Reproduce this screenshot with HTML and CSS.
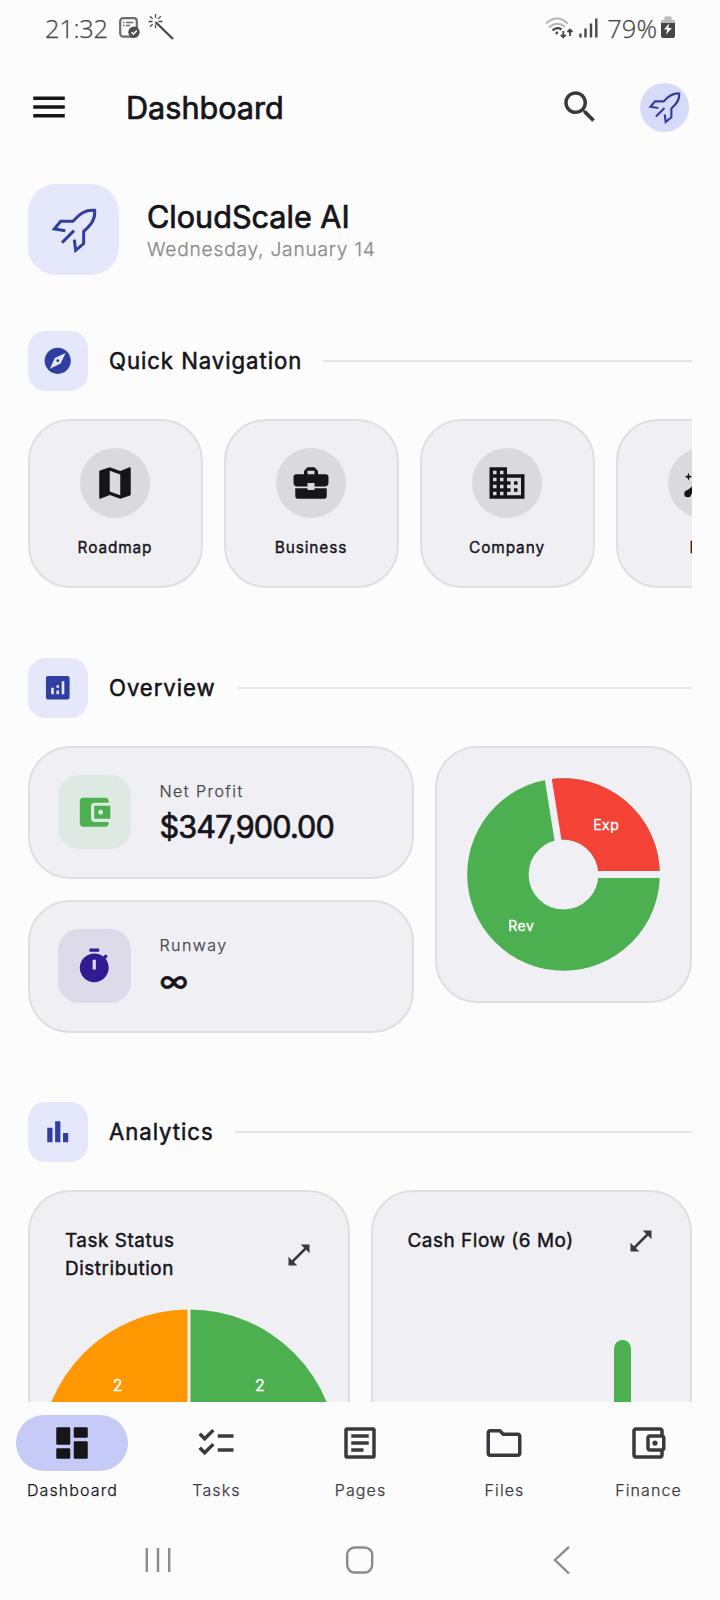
FILE: index.html
```html
<!DOCTYPE html>
<html lang="en">
<head>
    <meta charset="UTF-8">
    <meta name="viewport" content="width=device-width, initial-scale=1.0">
    <title>Dashboard</title>
    <link rel="stylesheet" href="styles.css">
</head>
<body>
    <svg class="defs" width="0" height="0">
        <symbol id="rocket" viewBox="142 129 156 156">
            <path d="M194 209L161 204L180 181H217C238 157 256 145 282 148C284 174 273 190 249 211V248L225 268L221 236M220 209L184 245" fill="none" stroke="currentColor" stroke-width="9"/>
        </symbol>
        <symbol id="expand" viewBox="0 0 24 24">
            <path d="M21 10.5V3h-7.5l2.9 2.9L5.9 16.4 3 13.5V21h7.5l-2.9-2.9L18.1 7.6z" fill="currentColor"/>
        </symbol>
    </svg>

    <div class="status-bar">
        <span class="clock">21:32</span>
        <svg class="note-icon" width="21" height="22" viewBox="0 0 21 22">
            <rect x="1.2" y="1.2" width="16.6" height="18.4" rx="3" fill="none" stroke="#6b6b6b" stroke-width="2.2"/>
            <path d="M4 5.5h1.5M7 5.5h7.5M4 8.5h1.5M7 8.5h4" stroke="#6b6b6b" stroke-width="1.5"/>
            <circle cx="15" cy="15.2" r="5.7" fill="#4f4f4f"/>
            <path d="M12.5 15.2l2 2 3.3-3.7" fill="none" stroke="#fcfcfc" stroke-width="1.6"/>
        </svg>
        <svg class="wand-icon" width="27" height="27" viewBox="0 0 27 27">
            <path d="M7.5 8L25 25" stroke="#4a4a4a" stroke-width="2.4"/>
            <path d="M7.5 0v4M7.5 10.5v3.5M.5 7.500h4M10.500 7.500h4M2 2.200l2.700 2.700M12.800 2.200l-2.700 2.700M2 12.800l2.700-2.700" stroke="#4a4a4a" stroke-width="1.300"/>
        </svg>
        <svg class="wifi-icon" width="28" height="22" viewBox="0 0 28 22">
            <path d="M1 6.500Q11.800-3.500 22.800 6.500M4 10.500Q11.800 3.500 20 9.800" fill="none" stroke="#b5b5b5" stroke-width="2"/>
            <path d="M7.500 13.500Q11.800 9.500 16.500 12.500" fill="none" stroke="#454545" stroke-width="2.200"/>
            <circle cx="11.800" cy="16" r="1.400" fill="#454545"/>
            <path d="M18.300 14v6M15.800 17.800l2.500 2.500 2.500-2.500M25 19v-6M22.500 15l2.500-2.500 2.500 2.500" fill="none" stroke="#454545" stroke-width="1.800"/>
        </svg>
        <svg class="signal-icon" width="19" height="20" viewBox="0 0 19 20">
            <path d="M1.500 15.500V19.500M6.500 10.500V19.500M12 5.500V19.500M17.300.5V19.500" stroke="#4a4a4a" stroke-width="2.400"/>
        </svg>
        <span class="battery-text">79%</span>
        <svg class="battery-icon" width="14" height="23" viewBox="0 0 14 23">
            <path d="M3.500 0.500h7v3h1.500a2 2 0 0 1 2 2V8H0V5.500a2 2 0 0 1 2-2h1.500z" fill="#bcbcbc"/>
            <path d="M0 7h14v13a2 2 0 0 1-2 2H2a2 2 0 0 1-2-2z" fill="#454545"/>
            <path d="M8 7.500L3 13.500h3.300L5 18.500l6-6.500H7.500z" fill="#fcfcfc"/>
        </svg>
    </div>

    <header class="app-bar">
        <svg class="icon" viewBox="0 0 24 24"><path d="M3 18h18v-2H3v2zm0-5h18v-2H3v2zm0-7v2h18V6H3z"/></svg>
        <h1 class="app-title bold">Dashboard</h1>
        <svg class="icon search" viewBox="0 0 24 24"><path d="M15.500 14h-.79l-.28-.27C15.410 12.590 16 11.110 16 9.500 16 5.910 13.090 3 9.500 3S3 5.910 3 9.500 5.910 16 9.500 16c1.610 0 3.090-.59 4.230-1.570l.27.28v.79l5 4.990L20.490 19l-4.990-5zm-6 0C7.010 14 5 11.990 5 9.500S7.010 5 9.500 5 14 7.010 14 9.500 11.990 14 9.500 14z"/></svg>
        <div class="avatar"><svg width="37" height="37"><use href="#rocket"/></svg></div>
    </header>

    <main class="content">
        <div class="company">
            <div class="company-logo"><svg width="52" height="52"><use href="#rocket"/></svg></div>
            <div class="company-text">
                <div class="company-name bold">CloudScale AI</div>
                <div class="company-date">Wednesday, January 14</div>
            </div>
        </div>

        <div class="section-header">
            <div class="section-icon"><svg viewBox="0 0 24 24"><path d="M12 10.900c-.61 0-1.100.49-1.100 1.100s.49 1.100 1.100 1.100c.61 0 1.100-.49 1.100-1.100s-.49-1.100-1.100-1.100zM12 2C6.480 2 2 6.480 2 12s4.480 10 10 10 10-4.480 10-10S17.520 2 12 2zm2.190 12.190L6 18l3.810-8.190L18 6l-3.810 8.190z"/></svg></div>
            <h2 class="bold">Quick Navigation</h2>
            <div class="rule"></div>
        </div>
        <div class="quick-nav">
            <div class="nav-card">
                <div class="nav-circle"><svg class="icon" viewBox="0 0 24 24"><path d="M20.500 3l-.16.03L15 5.100 9 3 3.360 4.900c-.21.070-.36.25-.36.48V20.500c0 .28.22.5.5.5l.16-.03L9 18.900l6 2.100 5.640-1.900c.21-.07.36-.25.36-.48V3.500c0-.28-.22-.5-.5-.5zM15 19l-6-2.110V5l6 2.110V19z"/></svg></div>
                <span class="bold">Roadmap</span>
            </div>
            <div class="nav-card">
                <div class="nav-circle"><svg class="icon" viewBox="0 0 24 24"><path d="M10 16v-1H3v4.500C3 20.300 3.700 21 4.500 21h15c.8 0 1.500-.7 1.500-1.500V15h-7v1h-4zM20.500 7H16V5.200L14 3h-4L8 5.200V7H3.500C2.700 7 2 7.700 2 8.500V12c0 1.100.9 2 2 2h6v-2h4v2h6c1.100 0 2-.9 2-2V8.500c0-.8-.7-1.500-1.500-1.500zM14 7h-4V5h4v2z"/></svg></div>
                <span class="bold">Business</span>
            </div>
            <div class="nav-card">
                <div class="nav-circle"><svg class="icon" viewBox="0 0 24 24"><path d="M12 7V3H2v18h20V7H12zM6 19H4v-2h2v2zm0-4H4v-2h2v2zm0-4H4V9h2v2zm0-4H4V5h2v2zm4 12H8v-2h2v2zm0-4H8v-2h2v2zm0-4H8V9h2v2zm0-4H8V5h2v2zm10 12h-8v-2h2v-2h-2v-2h2v-2h-2V9h8v10zm-2-8h-2v2h2v-2zm0 4h-2v2h2v-2z"/></svg></div>
                <span class="bold">Company</span>
            </div>
            <div class="nav-card">
                <div class="nav-circle"><svg class="icon" viewBox="0 0 24 24"><path d="M3.700 6.200l.6 1.600 1.600.6-1.600.6-.6 1.600-.6-1.600-1.600-.6 1.600-.6z"/><circle cx="3.300" cy="18.200" r="2"/><path d="M2.200 16.900L12 9l2 2-9.500 8z"/></svg></div>
                <span class="bold">Pro</span>
            </div>
        </div>

        <div class="section-header">
            <div class="section-icon"><svg viewBox="0 0 24 24"><path d="M19.500 3h-15C3.700 3 3 3.700 3 4.500v15c0 .8.7 1.500 1.500 1.500h15c.8 0 1.500-.7 1.500-1.500v-15c0-.8-.7-1.500-1.500-1.500zM9 17H7v-5h2v5zm4 0h-2v-3h2v3zm0-5h-2v-2h2v2zm4 5h-2V7h2v10z"/></svg></div>
            <h2 class="bold">Overview</h2>
            <div class="rule"></div>
        </div>
        <div class="overview">
            <div class="metrics">
                <div class="card metric">
                    <div class="metric-icon profit"><svg viewBox="0 0 24 24"><path d="M21 18v1c0 1.100-.9 2-2 2H5c-1.110 0-2-.9-2-2V5c0-1.100.89-2 2-2h14c1.100 0 2 .9 2 2v1h-9c-1.110 0-2 .9-2 2v8c0 1.100.89 2 2 2h9zm-9-2h10V8H12v8zm4-2.500c-.83 0-1.500-.67-1.500-1.500s.67-1.500 1.500-1.500 1.500.67 1.500 1.500-.67 1.500-1.500 1.500z"/></svg></div>
                    <div class="metric-text">
                        <div class="metric-label">Net Profit</div>
                        <div class="metric-value bold">$347,900.00</div>
                    </div>
                </div>
                <div class="card metric">
                    <div class="metric-icon runway"><svg viewBox="0 0 24 24"><path fill-rule="evenodd" d="M15 1H9v2h6V1zm-4 13h2V8h-2v6zm8.030-6.610l1.420-1.420c-.43-.51-.9-.99-1.410-1.410l-1.420 1.420C16.070 4.740 14.120 4 12 4c-4.970 0-9 4.030-9 9s4.020 9 9 9 9-4.030 9-9c0-2.120-.74-4.070-1.970-5.610z"/></svg></div>
                    <div class="metric-text">
                        <div class="metric-label">Runway</div>
                        <div class="metric-value bold">∞</div>
                    </div>
                </div>
            </div>
            <div class="card donut">
                <svg width="193" height="193" viewBox="-96.500 -96.500 193 193">
                    <circle r="65.600" fill="none" stroke="#4caf50" stroke-width="61.400"/>
                    <path d="M34.900 0H96.300A96.300 96.300 0 0 0-15.400-95.060L-5.600-34.450A34.900 34.900 0 0 1 34.900 0z" fill="#f44336"/>
                    <path d="M0 0H97M0 0L-15.500-97" stroke="#f0eff4" stroke-width="7"/>
                    <text class="chart-label small" x="-42.300" y="56.500">Rev</text>
                    <text class="chart-label small" x="42.700" y="-44.500">Exp</text>
                </svg>
            </div>
        </div>

        <div class="section-header">
            <div class="section-icon"><svg viewBox="0 0 24 24"><path d="M4 9h4v11H4zM16 13h4v7h-4zM10 4h4v16h-4z"/></svg></div>
            <h2 class="bold">Analytics</h2>
            <div class="rule"></div>
        </div>
        <div class="analytics">
            <div class="card chart-card">
                <div class="chart-head">
                    <h3 class="bold">Task Status Distribution</h3>
                    <svg width="28" height="28"><use href="#expand"/></svg>
                </div>
                <svg class="pie" width="298" height="298" viewBox="-149 -149 298 298">
                    <path d="M0 0V-148.600A148.600 148.600 0 0 0-148.600 0z" fill="#ff9800"/>
                    <path d="M0 0V-148.600A148.600 148.600 0 0 1 148.600 0z" fill="#4caf50"/>
                    <path d="M0 0V-149" stroke="#f0eff4" stroke-width="3"/>
                    <text class="chart-label" x="-71.300" y="-67.500">2</text>
                    <text class="chart-label" x="70.800" y="-67.500">2</text>
                </svg>
            </div>
            <div class="card chart-card">
                <div class="chart-head">
                    <h3 class="bold">Cash Flow (6 Mo)</h3>
                    <svg width="28" height="28"><use href="#expand"/></svg>
                </div>
                <div class="bars"><div class="bar"></div></div>
            </div>
        </div>
    </main>

    <nav class="bottom-nav">
        <div class="tab active">
            <div class="pill"><svg class="icon" viewBox="0 0 24 24"><rect x="3" y="3" width="8" height="10" rx=".7"/><rect x="13" y="3" width="8" height="6" rx=".7"/><rect x="3" y="15" width="8" height="6" rx=".7"/><rect x="13" y="11" width="8" height="10" rx=".7"/></svg></div>
            <span>Dashboard</span>
        </div>
        <div class="tab">
            <div class="pill"><svg class="icon" viewBox="0 0 24 24"><path d="M22 7h-9v2h9V7zm0 8h-9v2h9v-2zM5.540 11L2 7.460l1.410-1.410 2.120 2.120 4.240-4.240 1.410 1.410L5.540 11zm0 8L2 15.460l1.410-1.410 2.120 2.120 4.240-4.240 1.410 1.410L5.540 19z"/></svg></div>
            <span>Tasks</span>
        </div>
        <div class="tab">
            <div class="pill"><svg class="icon" viewBox="0 0 24 24"><path d="M19 5v14H5V5h14m.5-2h-15C3.700 3 3 3.700 3 4.500v15c0 .8.7 1.500 1.500 1.500h15c.8 0 1.500-.7 1.500-1.500v-15c0-.8-.7-1.500-1.500-1.500zM14 17H7v-2h7v2zM17 13H7v-2h10v2zM17 9H7V7h10v2z"/></svg></div>
            <span>Pages</span>
        </div>
        <div class="tab">
            <div class="pill"><svg class="icon" viewBox="0 0 24 24"><path d="M9.170 6l2 2H20v10H4V6h5.170M10 4H4c-1.100 0-1.990.9-1.990 2L2 18c0 1.100.9 2 2 2h16c1.100 0 2-.9 2-2V8c0-1.100-.9-2-2-2h-8l-2-2z"/></svg></div>
            <span>Files</span>
        </div>
        <div class="tab">
            <div class="pill"><svg class="icon" viewBox="0 0 24 24"><path d="M21 7.280V5c0-1.100-.9-2-2-2H5c-1.110 0-2 .9-2 2v14c0 1.100.89 2 2 2h14c1.100 0 2-.9 2-2v-2.280c.59-.35 1-.98 1-1.720V9c0-.74-.41-1.370-1-1.720zM20 9v6h-7V9h7zM5 19V5h14v2h-6c-1.100 0-2 .9-2 2v6c0 1.100.9 2 2 2h6v2H5z"/><circle cx="16" cy="12" r="1.500"/></svg></div>
            <span>Finance</span>
        </div>
    </nav>

    <div class="system-nav">
        <svg width="28" height="28" viewBox="0 0 28 28"><path d="M2.800 2v24M14 2v24M25.200 2v24"/></svg>
        <svg width="28" height="28" viewBox="0 0 28 28"><rect x="1.200" y="1.500" width="25" height="25" rx="7.500"/></svg>
        <svg width="28" height="28" viewBox="0 0 28 28"><path d="M21 .8L7 14l14 13.500"/></svg>
    </div>
</body>
</html>
```

FILE: styles.css
```css
* {
    box-sizing: border-box;
}
body {
    display: flex;
    flex-direction: column;
    width: 720px;
    height: 1600px;
    margin: 0;
    overflow: hidden;
    font-family: Inter, "Liberation Sans", sans-serif;
    font-weight: 300;
    -webkit-text-stroke: 0.25px;
    color: #15151a;
    background-color: #fcfcfc;
}
svg {
    display: block;
    flex-shrink: 0;
}
.defs {
    position: absolute;
}
h1, h2, h3 {
    margin: 0;
}
.bold {
    font-weight: 400;
    -webkit-text-stroke: 0.024em;
}
.icon {
    width: 42px;
    height: 42px;
    fill: currentColor;
}

/* Status bar */
.status-bar {
    display: flex;
    align-items: center;
    flex-shrink: 0;
    height: 58px;
    padding: 0 45px 3px;
    font-family: "Open Sans", sans-serif;
    font-size: 25.5px;
    color: #484848;
}
.clock {
    width: 74px;
    letter-spacing: -0.3px;
}
.wand-icon {
    margin-left: 8px;
}
.wifi-icon {
    margin-left: auto;
}
.signal-icon {
    margin: 0 9px 0 6px;
}
.battery-icon {
    margin-left: 4px;
}

/* App bar */
.app-bar {
    display: flex;
    align-items: center;
    flex-shrink: 0;
    height: 98px;
    padding: 0 31.5px 0 28px;
}
.app-title {
    flex: 1;
    margin-left: 56px;
    padding-top: 1px;
    font-size: 30.6px;
}
.search {
    color: #3a393e;
}
.avatar {
    display: flex;
    align-items: center;
    justify-content: center;
    width: 49px;
    height: 49px;
    margin-left: 38.5px;
    border-radius: 50%;
    color: #303f9f;
    background-color: #d6dbfa;
}

/* Scrolling content */
.content {
    flex: 1;
    min-height: 0;
    padding: 28px 28px 0;
    overflow: hidden;
}
.company {
    display: flex;
    align-items: center;
    gap: 28px;
    margin-bottom: 56px;
}
.company-logo {
    display: flex;
    align-items: center;
    justify-content: center;
    width: 91px;
    height: 91px;
    border-radius: 28px;
    color: #303f9f;
    background-color: #e5e8fb;
}
.company-text {
    padding-top: 2px;
}
.company-name {
    font-size: 30.6px;
    line-height: 38px;
}
.company-date {
    font-size: 19.2px;
    line-height: 27px;
    letter-spacing: 0.77px;
    color: #8a8a8d;
}
.section-header {
    display: flex;
    align-items: center;
    height: 59.5px;
    margin-bottom: 28px;
}
.section-icon {
    display: flex;
    align-items: center;
    justify-content: center;
    width: 59.5px;
    height: 59.5px;
    border-radius: 17.5px;
    background-color: #e5e8fb;
}
.section-icon svg {
    width: 31.5px;
    height: 31.5px;
    fill: #303f9f;
}
.section-header h2 {
    margin: 0 21px 0 21.5px;
    font-size: 22.2px;
    letter-spacing: 0.93px;
}
.rule {
    flex: 1;
    height: 2px;
    background-color: #e5e5e7;
}
.quick-nav {
    display: flex;
    gap: 21px;
    margin-bottom: 70.5px;
    overflow: hidden;
}
.nav-card {
    display: flex;
    flex-direction: column;
    align-items: center;
    flex: 0 0 175px;
    height: 169px;
    padding: 27px 1px 0 0;
    border: 2px solid #dfdfe3;
    border-radius: 42px;
    background-color: #f0eff4;
    font-size: 15.4px;
    line-height: 20px;
    letter-spacing: 0.88px;
}
.nav-circle {
    display: flex;
    align-items: center;
    justify-content: center;
    width: 70px;
    height: 70px;
    margin-bottom: 20px;
    border-radius: 50%;
    background-color: #dad9de;
}
.card {
    border: 2px solid #dfdfe3;
    border-radius: 42px;
    background-color: #f0eff4;
}
.overview {
    display: flex;
    align-items: flex-start;
    gap: 21px;
    margin-bottom: 69.5px;
}
.metrics {
    display: flex;
    flex-direction: column;
    flex: 1;
    gap: 21px;
}
.metric {
    display: flex;
    align-items: center;
    gap: 28.5px;
    height: 133px;
    padding: 0 27.5px;
}
.metric-icon {
    display: flex;
    align-items: center;
    justify-content: center;
    width: 73.5px;
    height: 73.5px;
    border-radius: 21px;
}
.metric-icon svg {
    width: 38.5px;
    height: 38.5px;
    fill: currentColor;
}
.profit {
    color: #4caf50;
    background-color: #dfe9e3;
}
.runway {
    color: #311b92;
    background-color: #dddaea;
}
.metric-text {
    padding-top: 3px;
}
.metric-label {
    font-size: 16px;
    line-height: 26px;
    letter-spacing: 1.45px;
    color: #45454a;
}
.metric-value {
    font-size: 30.6px;
    line-height: 46px;
    letter-spacing: -0.85px;
}
.donut {
    display: flex;
    align-items: center;
    justify-content: center;
    width: 257px;
    height: 257px;
}
.chart-label {
    font-size: 16px;
    text-anchor: middle;
    fill: #fff;
    stroke: #fff;
    stroke-width: 0.6px;
}
.small {
    font-size: 14px;
    letter-spacing: 0.6px;
}
.analytics {
    display: flex;
    gap: 21px;
}
.chart-card {
    display: flex;
    flex-direction: column;
    align-items: center;
    flex: 1;
    height: 480px;
    padding-top: 35px;
}
.chart-head {
    display: flex;
    align-items: center;
    justify-content: space-between;
    align-self: stretch;
    padding: 0 35px;
    color: #3a393e;
}
.chart-head h3 {
    width: 180px;
    font-size: 18.9px;
    line-height: 28px;
    letter-spacing: 0.55px;
    color: #15151a;
}
.pie {
    margin-top: 26px;
}
.bars {
    align-self: stretch;
    padding: 85px 59px 0 0;
}
.bar {
    width: 17.5px;
    height: 230px;
    margin-left: auto;
    border-radius: 9px;
    background-color: #4caf50;
}

/* Bottom navigation */
.bottom-nav {
    display: flex;
    flex-shrink: 0;
    height: 118px;
    padding-top: 13px;
}
.tab {
    display: flex;
    flex-direction: column;
    align-items: center;
    flex: 1;
    gap: 8px;
    font-size: 16px;
    line-height: 22px;
    letter-spacing: 1.1px;
    color: #3a393e;
}
.tab span {
    padding-left: 1px;
}
.pill {
    display: flex;
    align-items: center;
    justify-content: center;
    width: 112px;
    height: 56px;
    border-radius: 28px;
}
.tab.active {
    color: #15151a;
}
.active .pill {
    background-color: #c5cbf6;
}
.system-nav {
    display: flex;
    justify-content: space-between;
    align-items: center;
    flex-shrink: 0;
    height: 80px;
    padding: 0 144px;
}
.system-nav svg {
    fill: none;
    stroke: #8c8c8c;
    stroke-width: 2.4px;
}
```
